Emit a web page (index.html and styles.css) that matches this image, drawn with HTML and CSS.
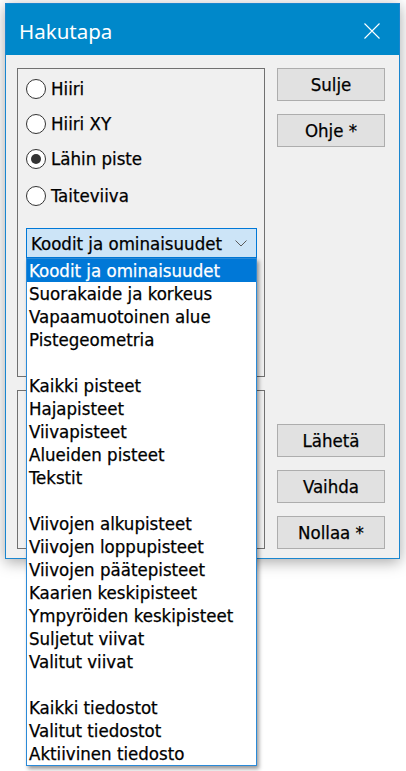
FILE: index.html
```html
<!DOCTYPE html>
<html>
<head>
<meta charset="utf-8">
<title>Hakutapa</title>
<link rel="stylesheet" href="styles.css">
</head>
<body>
<div class="window">
  <div class="titlebar">
    <span class="title">Hakutapa</span>
    <svg class="close" width="16" height="16" viewBox="0 0 16 16">
      <path d="M0.5 0.5 L15.5 15.5 M15.5 0.5 L0.5 15.5" stroke="#fff" stroke-width="1.1" fill="none"/>
    </svg>
  </div>
  <div class="client">
    <div class="groups">
      <div class="group group-top">
        <div class="radio r1"><span class="circle"></span>Hiiri</div>
        <div class="radio r2"><span class="circle"></span>Hiiri XY</div>
        <div class="radio r3"><span class="circle checked"></span>Lähin piste</div>
        <div class="radio r4"><span class="circle"></span>Taiteviiva</div>
        <div class="combo">
          <span>Koodit ja ominaisuudet</span>
          <svg class="chevron" width="12" height="7" viewBox="0 0 12 7">
            <path d="M0.5 0.5 L6 6 L11.5 0.5" stroke="#5a5a5a" stroke-width="1" fill="none"/>
          </svg>
        </div>
      </div>
      <div class="group group-bottom"></div>
    </div>
    <div class="buttons">
      <div class="btn">Sulje</div>
      <div class="btn">Ohje *</div>
      <div class="btn btn-gap">Lähetä</div>
      <div class="btn">Vaihda</div>
      <div class="btn">Nollaa *</div>
    </div>
  </div>
</div>
<ul class="dropdown">
  <li class="selected">Koodit ja ominaisuudet</li>
  <li>Suorakaide ja korkeus</li>
  <li>Vapaamuotoinen alue</li>
  <li>Pistegeometria</li>
  <li></li>
  <li>Kaikki pisteet</li>
  <li>Hajapisteet</li>
  <li>Viivapisteet</li>
  <li>Alueiden pisteet</li>
  <li>Tekstit</li>
  <li></li>
  <li>Viivojen alkupisteet</li>
  <li>Viivojen loppupisteet</li>
  <li>Viivojen päätepisteet</li>
  <li>Kaarien keskipisteet</li>
  <li>Ympyröiden keskipisteet</li>
  <li>Suljetut viivat</li>
  <li>Valitut viivat</li>
  <li></li>
  <li>Kaikki tiedostot</li>
  <li>Valitut tiedostot</li>
  <li>Aktiivinen tiedosto</li>
</ul>
</body>
</html>
```
FILE: styles.css
```css
html, body {
  margin: 0;
  padding: 0;
  background: #ffffff;
}
body {
  position: relative;
  min-height: 771px;
  font-family: "DejaVu Sans Condensed", "DejaVu Sans", sans-serif;
  font-size: 18.5px;
  color: #000;
  -webkit-text-stroke: 0.25px #000;
}
.window {
  position: relative;
  box-sizing: border-box;
  margin: 3px 0 0 5px;
  width: 395px;
  height: 556px;
  border: 1px solid #1a86cf;
  background: #f0f0f0;
  box-shadow: 0 3px 14px rgba(0, 0, 0, 0.35);
}
.titlebar {
  height: 51px;
  background: #0088ca;
  display: flex;
  align-items: center;
  justify-content: space-between;
  padding: 0 19px 0 13px;
  color: #fff;
  -webkit-text-stroke: 0;
}
.title {
  font-family: "Noto Sans", "Open Sans", sans-serif;
  font-size: 20.5px;
  padding-top: 2px;
}
.close {
  display: block;
  margin-top: 2px;
}
.client {
  display: grid;
  grid-template-columns: 248px 108px;
  column-gap: 12px;
  padding: 13px 14px 0 11px;
}
.groups {
  display: flex;
  flex-direction: column;
  gap: 13px;
}
.group {
  box-sizing: border-box;
  border: 1px solid #707070;
}
.group-top {
  height: 309px;
  padding: 8px 0 0 8px;
}
.group-bottom {
  height: 159px;
}
.radio {
  display: flex;
  align-items: center;
  height: 24px;
  line-height: 24px;
}
.r2, .r3 { margin-top: 11px; }
.r4 { margin-top: 13px; }
.circle {
  box-sizing: border-box;
  width: 20px;
  height: 20px;
  border: 1px solid #333;
  border-radius: 50%;
  background: #fff;
  margin-right: 5px;
  display: flex;
  align-items: center;
  justify-content: center;
  -webkit-text-stroke: 0;
}
.circle.checked::after {
  content: "";
  width: 10px;
  height: 10px;
  border-radius: 50%;
  background: #333;
}
.combo {
  box-sizing: border-box;
  margin-top: 20px;
  width: 231px;
  height: 30px;
  border: 1px solid #0078d7;
  background: #cce4f7;
  display: flex;
  align-items: center;
  justify-content: space-between;
  padding: 0 9px 0 4px;
}
.chevron {
  display: block;
}
.dropdown {
  position: absolute;
  top: 258px;
  left: 26px;
  z-index: 5;
  box-sizing: border-box;
  width: 231px;
  margin: 0;
  padding: 0;
  list-style: none;
  background: #fff;
  border: 1px solid #2a8ad8;
  box-shadow: 2px 3px 4px rgba(0, 0, 0, 0.4);
}
.dropdown li {
  height: 23px;
  line-height: 23px;
  padding-left: 2px;
  white-space: nowrap;
}
.dropdown li.selected {
  background: #0078d7;
  color: #fff;
  -webkit-text-stroke: 0.25px #fff;
}
.buttons {
  display: flex;
  flex-direction: column;
  gap: 13px;
}
.btn {
  box-sizing: border-box;
  height: 33px;
  border: 1px solid #adadad;
  background: #e1e1e1;
  display: flex;
  align-items: center;
  justify-content: center;
}
.btn-gap {
  margin-top: 264px;
}
```
